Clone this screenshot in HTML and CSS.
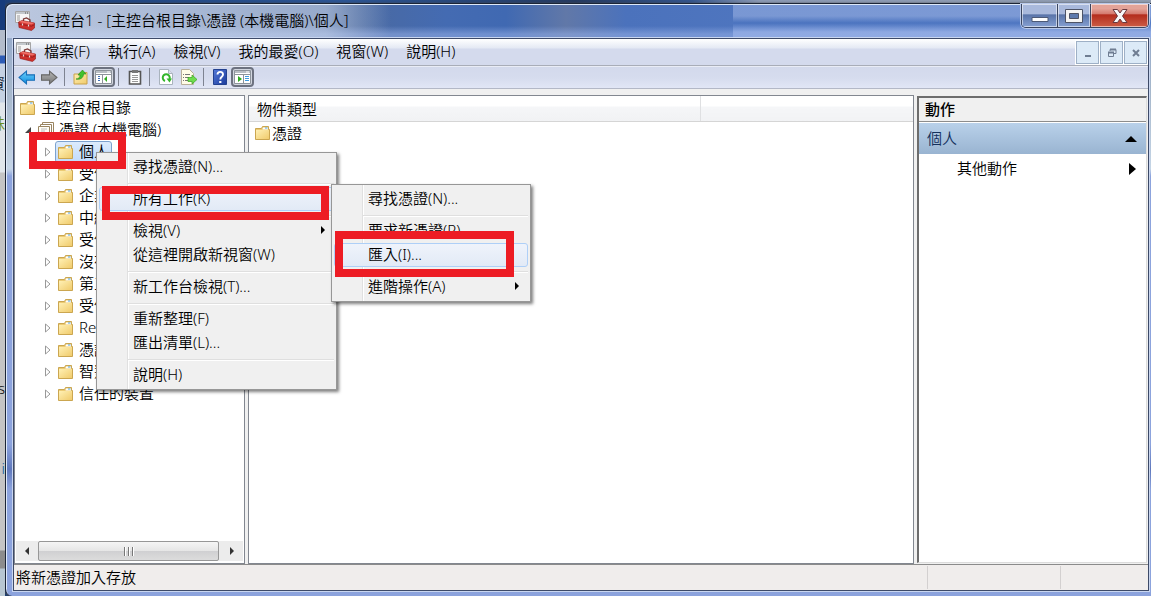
FILE: index.html
```html
<!DOCTYPE html>
<html lang="zh-Hant">
<head>
<meta charset="utf-8">
<title>主控台1</title>
<link rel="stylesheet" href="styles.css">
</head>
<body>
<svg class="defs" aria-hidden="true">
  <defs>
    <linearGradient id="gold" x1="0" y1="0" x2="1" y2="1"><stop offset="0" stop-color="#fff0b4"/><stop offset="1" stop-color="#f0cb6c"/></linearGradient>
    <linearGradient id="blue" x1="0" y1="0" x2="0" y2="1"><stop offset="0" stop-color="#6fd0fa"/><stop offset="1" stop-color="#0d8de0"/></linearGradient>
    <linearGradient id="gray" x1="0" y1="0" x2="0" y2="1"><stop offset="0" stop-color="#b5b5b5"/><stop offset="1" stop-color="#777"/></linearGradient>
    <linearGradient id="navy" x1="0" y1="0" x2="1" y2="1"><stop offset="0" stop-color="#5479d8"/><stop offset="1" stop-color="#1b3b9c"/></linearGradient>
    <symbol id="folder" viewBox="0 0 15 14">
      <path d="M.500 2.500h6l1-2h6v3h1v10H.500z" fill="#eccb74" stroke="#cba650"/>
      <path d="M8 1.500h5v2H7.500z" fill="#fff"/><path d="M10 1.500h2.500v1H10z" fill="#4fa3e0"/>
      <path d="M1 4h13v9H1z" fill="url(#gold)"/>
    </symbol>
    <symbol id="toolbox" viewBox="0 0 20 20">
      <path d="M.500.500h14v11H.500z" fill="#f6f6f6" stroke="#a5a5a5"/>
      <path d="M1 1h13v2H1z" fill="#c3c8cc"/><path d="M2 5h3M2 7h3M2 9h3" stroke="#9b9b9b"/><path d="M10 2h1M12 2h1" stroke="#555"/>
      <path d="M8.500 10.500v-2.500l3-1 3.500 2v2.500" fill="none" stroke="#7d3a38" stroke-width="1.300"/>
      <path d="M3.500 11l3.500-1.500 12.500 2.500v5l-3 2.500L4 16.500z" fill="#cf302c" stroke="#8f1a18" stroke-width=".6"/>
      <path d="M4 11l3-1.300 12.300 2.400-3 1.400z" fill="#ef6f66"/><path d="M4 13l12.500 2.200 3-1.500" stroke="#8d1a18" fill="none" stroke-width=".8"/>
      <path d="M7.500 12.500v2M13.500 13.500v2" stroke="#e8d8d8" stroke-width="1.200"/>
    </symbol>
    <symbol id="certs" viewBox="0 0 16 16">
      <path d="M4.500.500h11v10h-11z" fill="#fff" stroke="#9a8560"/><path d="M2.500 2.500h11v10h-11z" fill="#fff" stroke="#9a8560"/>
      <path d="M.500 4.500h11v10H.500z" fill="#fffdf5" stroke="#9a8560"/><path d="M3 7h6M3 9h4" stroke="#bbb"/><path d="M8 10h3v3H8z" fill="#d8942c"/>
    </symbol>
    <symbol id="arrow" viewBox="0 0 16 14"><path d="M1 7l7-6v3.500h7.500v5H8V13z"/></symbol>
    <symbol id="up" viewBox="0 0 16 16">
      <path d="M1 5h5l1-1.500h7V15H1z" fill="url(#gold)" stroke="#c9a24c"/>
      <path d="M3 10c3 0 4-2 4-4H5l4.500-5L13 5h-2.500C10.500 9 7 11 3 10z" fill="#41c22d" stroke="#228c18" stroke-width=".6"/>
    </symbol>
    <symbol id="pane-l" viewBox="0 0 17 14">
      <path d="M.500.500h16v13H.500z" fill="#fff" stroke="#8d939b"/><path d="M1 1h15v2H1z" fill="#b8bdc4"/><path d="M12 2h3" stroke="#fff"/><path d="M1 4.500h15M7.500 5v8" stroke="#8d939b"/>
      <path d="M3 6.500h2M3 8.500h2M3 10.500h2" stroke="#3e6db5"/><path d="M12 6v6L9 9z" fill="#2faa20"/>
    </symbol>
    <symbol id="pane-r" viewBox="0 0 17 14">
      <path d="M.500.500h16v13H.500z" fill="#fff" stroke="#8d939b"/><path d="M1 1h15v2H1z" fill="#b8bdc4"/><path d="M12 2h3" stroke="#fff"/><path d="M1 4.500h15M9.500 5v8" stroke="#8d939b"/>
      <path d="M11 6.500h4M11 8.500h4M11 10.500h4" stroke="#3e9be0"/><path d="M4 6v6l4-3z" fill="#2faa20"/>
    </symbol>
    <symbol id="clip" viewBox="0 0 14 16">
      <path d="M1.500 2.500h11v12.500h-11z" fill="#fff" stroke="#555" stroke-width="1.600"/><path d="M4 1h6v3H4z" fill="#777"/>
      <path d="M4 6.500h6M4 8.500h6M4 10.500h6M4 12.500h6" stroke="#999"/>
    </symbol>
    <symbol id="refresh" viewBox="0 0 14 16">
      <path d="M.500.500h9l4 4v11H.500z" fill="#fff" stroke="#a9b3bd"/><path d="M9.500.500v4h4" fill="#dde" stroke="#a9b3bd"/>
      <path d="M6 12a3.500 3.500 0 1 1 4.500-2" fill="none" stroke="#33b52b" stroke-width="2"/><path d="M7.500 9.500h5.500l-2.500 4z" fill="#33b52b"/>
    </symbol>
    <symbol id="export" viewBox="0 0 16 16">
      <path d="M.500.500h8l4 4v11H.500z" fill="#fffce8" stroke="#b9b09a"/><path d="M2 5.500h1M2 8.500h1M2 11.500h1M4 5.500h5M4 8.500h4M4 11.500h4" stroke="#777"/>
      <path d="M7 8.500h4V6l5 4.500-5 4.500v-2.500H7z" fill="#6fdc4e" stroke="#36a51f" stroke-width=".7"/>
    </symbol>
    <symbol id="help" viewBox="0 0 14 16">
      <path d="M.500.500h13v15H.500z" fill="url(#navy)" stroke="#23418f"/><path d="M4.500 5.500c0-3.500 5.500-3.500 5.500 0C10 8 7.300 7.500 7.300 10.500" fill="none" stroke="#fff" stroke-width="1.900"/><path d="M6.200 12h2.200v2H6.200z" fill="#fff"/>
    </symbol>
    <symbol id="closed" viewBox="0 0 8 10"><path d="M1.500 1v8l4.500-4z" fill="#fff" stroke="#999"/></symbol>
  </defs>
</svg>

<div class="backdrop" aria-hidden="true">
  <span class="bit bit-tool">資</span><span class="bit bit-green">株</span><span class="bit bit-s">s</span><span class="bit bit-i">i</span>
</div>

<main class="window">
  <header class="titlebar">
    <svg class="app-icon"><use href="#toolbox"/></svg>
    <h1 class="title">主控台1 - [主控台根目錄\憑證 (本機電腦)\個人]</h1>
    <div class="caption">
      <button class="cap cap-min" aria-label="最小化"><svg width="18" height="7"><path d="M1 1.500h16v4H1z" fill="#fff" stroke="#4d5a77"/></svg></button>
      <button class="cap cap-max" aria-label="最大化"><svg width="18" height="14"><path d="M.500.500h17v13H.500z" fill="#f4f4f4" stroke="#4d5366"/><path d="M4.500 4.500h9v5h-9z" fill="#5c79ad" stroke="#4d5366"/></svg></button>
      <button class="cap cap-close" aria-label="關閉"><svg width="16" height="14"><path d="M1 .500h4.500L8 4l2.500-3.500H15L10.500 7l4.500 6.500h-4.500L8 10l-2.500 3.500H1L5.500 7z" fill="#f8f8f8" stroke="#6a3a40"/></svg></button>
    </div>
  </header>

  <div class="client">
    <nav class="menubar">
      <svg class="app-icon"><use href="#toolbox"/></svg>
      <button>檔案(F)</button><button>執行(A)</button><button>檢視(V)</button><button>我的最愛(O)</button><button>視窗(W)</button><button>說明(H)</button>
      <div class="mdi">
        <button aria-label="最小化子視窗"><svg width="10" height="10"><path d="M2 8h6" stroke="#6f7d92" stroke-width="2"/></svg></button>
        <button aria-label="還原子視窗"><svg width="10" height="10"><path d="M3 3V1.500h6v4H7M1.500 4.500h5v4h-5z" fill="none" stroke="#6f7d92"/><path d="M3 1.500h6M1 4.500h6" stroke="#6f7d92" stroke-width="2"/></svg></button>
        <button aria-label="關閉子視窗"><svg width="10" height="10"><path d="M2 2l6 6M8 2L2 8" stroke="#6f7d92" stroke-width="2"/></svg></button>
      </div>
    </nav>

    <div class="toolbar">
      <button aria-label="上一頁"><svg width="17" height="15" fill="url(#blue)" stroke="#1a6fb8"><use href="#arrow"/></svg></button>
      <button aria-label="下一頁"><svg class="flip" width="17" height="15" fill="url(#gray)" stroke="#666"><use href="#arrow"/></svg></button>
      <i class="sep"></i>
      <button aria-label="上一層"><svg width="16" height="16"><use href="#up"/></svg></button>
      <button class="on" aria-label="顯示或隱藏主控台樹狀目錄"><svg width="17" height="14"><use href="#pane-l"/></svg></button>
      <i class="sep"></i>
      <button aria-label="內容"><svg width="14" height="16"><use href="#clip"/></svg></button>
      <i class="sep"></i>
      <button aria-label="重新整理"><svg width="14" height="16"><use href="#refresh"/></svg></button>
      <button aria-label="匯出清單"><svg width="16" height="16"><use href="#export"/></svg></button>
      <i class="sep"></i>
      <button aria-label="說明"><svg width="14" height="16"><use href="#help"/></svg></button>
      <button class="on" aria-label="顯示或隱藏動作窗格"><svg width="17" height="14"><use href="#pane-r"/></svg></button>
    </div>

    <div class="panes">
      <section class="tree">
        <ul class="nodes">
          <li class="root"><button><svg class="ico"><use href="#folder"/></svg><span>主控台根目錄</span></button></li>
          <li class="store"><svg class="tri"><path d="M7 2v6H1z" fill="#444"/></svg><button><svg class="ico tall"><use href="#certs"/></svg><span>憑證 (本機電腦)</span></button></li>
          <li class="leaf"><svg class="tri"><use href="#closed"/></svg><button class="selected"><svg class="ico"><use href="#folder"/></svg><span>個人</span></button></li>
          <li class="leaf"><svg class="tri"><use href="#closed"/></svg><button><svg class="ico"><use href="#folder"/></svg><span>受信任</span></button></li>
          <li class="leaf"><svg class="tri"><use href="#closed"/></svg><button><svg class="ico"><use href="#folder"/></svg><span>企業信任</span></button></li>
          <li class="leaf"><svg class="tri"><use href="#closed"/></svg><button><svg class="ico"><use href="#folder"/></svg><span>中繼憑證</span></button></li>
          <li class="leaf"><svg class="tri"><use href="#closed"/></svg><button><svg class="ico"><use href="#folder"/></svg><span>受信任</span></button></li>
          <li class="leaf"><svg class="tri"><use href="#closed"/></svg><button><svg class="ico"><use href="#folder"/></svg><span>沒有信任</span></button></li>
          <li class="leaf"><svg class="tri"><use href="#closed"/></svg><button><svg class="ico"><use href="#folder"/></svg><span>第三方</span></button></li>
          <li class="leaf"><svg class="tri"><use href="#closed"/></svg><button><svg class="ico"><use href="#folder"/></svg><span>受信任</span></button></li>
          <li class="leaf"><svg class="tri"><use href="#closed"/></svg><button><svg class="ico"><use href="#folder"/></svg><span>Remote</span></button></li>
          <li class="leaf"><svg class="tri"><use href="#closed"/></svg><button><svg class="ico"><use href="#folder"/></svg><span>憑證註冊</span></button></li>
          <li class="leaf"><svg class="tri"><use href="#closed"/></svg><button><svg class="ico"><use href="#folder"/></svg><span>智慧卡</span></button></li>
          <li class="leaf"><svg class="tri"><use href="#closed"/></svg><button><svg class="ico"><use href="#folder"/></svg><span>信任的裝置</span></button></li>
        </ul>
        <div class="hscroll">
          <button aria-label="向左捲動"><svg width="6" height="10"><path d="M5 1v8L1 5z" fill="#333"/></svg></button>
          <div class="thumb"><i></i><i></i><i></i></div>
          <button aria-label="向右捲動"><svg width="6" height="10"><path d="M1 1v8l4-4z" fill="#333"/></svg></button>
        </div>
      </section>

      <section class="list">
        <table>
          <thead><tr><th class="type">物件類型</th><th></th></tr></thead>
          <tbody><tr><td><div class="cell"><svg class="ico"><use href="#folder"/></svg><span>憑證</span></div></td><td></td></tr></tbody>
        </table>
      </section>

      <aside class="actions">
        <h2>動作</h2>
        <button class="group"><span>個人</span><svg width="12" height="6"><path d="M6 0l6 6H0z"/></svg></button>
        <button class="more"><span>其他動作</span><svg width="7" height="12"><path d="M0 0l7 6-7 6z"/></svg></button>
      </aside>
    </div>

    <footer class="status"><span>將新憑證加入存放</span><i class="slot wide"></i><i class="slot"></i></footer>
  </div>
</main>

<div class="menu menu-main" role="menu">
  <button role="menuitem">尋找憑證(N)...</button>
  <hr>
  <button role="menuitem" class="hot">所有工作(K)</button>
  <hr>
  <button role="menuitem"><span>檢視(V)</span><svg width="5" height="8"><path d="M0 0l4 4-4 4z"/></svg></button>
  <button role="menuitem">從這裡開啟新視窗(W)</button>
  <hr>
  <button role="menuitem">新工作台檢視(T)...</button>
  <hr>
  <button role="menuitem">重新整理(F)</button>
  <button role="menuitem">匯出清單(L)...</button>
  <hr>
  <button role="menuitem">說明(H)</button>
</div>
<div class="menu menu-sub" role="menu">
  <button role="menuitem">尋找憑證(N)...</button>
  <hr>
  <button role="menuitem">要求新憑證(R)</button>
  <button role="menuitem" class="hot">匯入(I)...</button>
  <hr>
  <button role="menuitem"><span>進階操作(A)</span><svg width="5" height="8"><path d="M0 0l4 4-4 4z"/></svg></button>
</div>

<div class="mark mark-node"></div>
<div class="mark mark-tasks"></div>
<div class="mark mark-import"></div>
</body>
</html>
```
FILE: styles.css
```css
* { box-sizing: border-box; }
body {
  margin: 0;
  height: 100vh;
  display: flex;
  overflow: hidden;
  background: linear-gradient(90deg, #1c3f78, #2c5594 30%, #253a60 50%, #34558c 60%, #8b99b3 66%, #909cb0);
  font: 350 15px/22px "Noto Sans", "Noto Sans CJK TC", sans-serif;
  color: #000;
}
button {
  margin: 0; padding: 0; border: 0; background: none;
  font: inherit; color: inherit; text-align: left;
  display: flex; align-items: center;
}
svg { display: block; flex: none; }
.defs { position: absolute; width: 0; height: 0; }

.backdrop {
  flex: none; width: 5px; position: relative; overflow: hidden;
  background: linear-gradient(#173c7c 0 30px, #b3bccb 30px 55px, #2d5cb5 56px 63px, #c5d2e3 64px 102px, #e1e6ea 103px 172px, #c4c4c4 173px 550px, #8c8c8c 551px 568px, #b7c6d1 569px);
}
.bit { position: absolute; right: 0; }
.bit-tool { top: 72px; color: #123; }
.bit-green { top: 112px; color: #6b8e23; }
.bit-s { top: 377px; }
.bit-i { top: 457px; color: #0a5a9c; }

.window {
  flex: 1; min-width: 0;
  margin-top: 3px;
  padding: 0 2px 5px 7px;
  display: flex; flex-direction: column;
  border: solid #1c2536; border-width: 1px 0 0 1px;
  border-radius: 7px 0 0 7px;
  box-shadow: inset 1px 1px #dde8f8, -1px 0 2px #444;
  background:
    linear-gradient(90deg, rgba(228,234,245,.6) 0, rgba(222,230,243,.5) 320px, rgba(200,210,230,0) 385px) 0 0 / 100% 34px no-repeat,
    linear-gradient(rgba(140,166,220,.7) 0 12px, rgba(70,112,190,.5) 19px, rgba(150,175,230,.8) 28px) 727px 0 / 100% 34px no-repeat,
    linear-gradient(rgba(150,175,230,0) 22px, rgba(150,175,230,.55) 30px) 0 0 / 100% 34px no-repeat,
    linear-gradient(90deg, #7f95be 0, #4a69a0 350px, #446bb2 440px, #4069b2 500px, #6178a8 560px, #4b72bc 620px, #5a80c8 100%) 0 0 / 100% 34px no-repeat,
    linear-gradient(#8ea4ca 0, #a7b8cc 90px, #c5d5e6 165px, #8ca3dd 172px, #8ca3dd 440px, #5f78bd 465px, #8ca3dd 485px);
}
.titlebar { height: 34px; flex: none; display: flex; align-items: center; padding-left: 2px; }
.app-icon { width: 20px; height: 20px; }
.title { margin: 0 0 0 5px; padding-bottom: 2px; font: inherit; flex: 1; white-space: nowrap; }
.caption {
  align-self: flex-start; display: flex; height: 24px;
  border: 1px solid #3a4560; border-top: 0; border-radius: 0 0 5px 5px; overflow: hidden;
  box-shadow: 0 0 0 1px #b8c8ea;
}
.cap { justify-content: center; box-shadow: inset 0 0 0 1px rgba(255,255,255,.55); }
.cap-min { width: 35px; padding-top: 8px; background: linear-gradient(#a9b9dc 0 45%, #5873a8 46%, #86a0d2); }
.cap-max { width: 34px; border: solid #3a4560; border-width: 0 1px; background: linear-gradient(#a9b9dc 0 45%, #5873a8 46%, #86a0d2); }
.cap-close { width: 57px; background: linear-gradient(#e3a398 0 20%, #d3766a 45%, #b32c1c 46%, #cc5c45); }

.client {
  flex: 1; min-height: 0; display: flex; flex-direction: column;
  border: 1px solid #3d4a68; background: #f0f0f0;
  box-shadow: 0 0 0 1px #c9d6f0;
}
.menubar {
  flex: none; height: 27px; display: flex; align-items: stretch; padding-left: 2px;
  background: linear-gradient(#fff, #e4e9f4 9px, #d4daed 10px); border-bottom: 1px solid #a9adb8;
}
.menubar .app-icon { align-self: center; margin-right: -1px; }
.menubar > button { padding: 0 9px 2px; }
.mdi { margin-left: auto; display: flex; gap: 1px; padding: 2px 1px 1px; background: #fff; }
.mdi button { width: 23px; justify-content: center; border: 1px solid #9eb0c6; background: #dceaf7; }

.toolbar {
  flex: none; height: 23px; display: flex; align-items: center; padding-left: 1px;
  background: linear-gradient(#fff, #d3d9ec 1px, #d6dcee 12px, #e1e6f6); border-bottom: 1px solid #b3b8c7;
}
.toolbar button { width: 23px; height: 20px; justify-content: center; }
.toolbar .on { border: 2px solid #6d7280; border-radius: 4px; background: #d2d6df; }
.flip { transform: scaleX(-1); }
.sep { width: 1px; height: 18px; margin: 0 4px 0 3px; background: #7e8391; }

.panes {
  flex: 1; min-height: 0; padding-top: 6px;
  display: grid; grid-template-columns: 231px minmax(0, 1fr) 231px; column-gap: 3px;
}
.tree, .list { background: #fff; border: 1px solid #828790; min-width: 0; }
.tree { display: flex; flex-direction: column; overflow: hidden; padding: 1px 1px 2px; }
.nodes { list-style: none; margin: 0; padding: 0; flex: 1; }
.nodes li { height: 22px; display: flex; align-items: center; white-space: nowrap; }
.nodes button { height: 22px; gap: 6px; padding: 0 2px; border: 1px solid transparent; }
.nodes span { padding-bottom: 2px; }
.nodes .root { padding-left: 1px; }
.nodes .store { padding-left: 8px; }
.nodes .store button { gap: 5px; margin-left: 3px; }
.nodes .leaf { padding-left: 28px; }
.nodes .leaf button { margin-left: 3px; }
.nodes .selected { border-color: #7da2ce; border-radius: 3px; background: linear-gradient(#dcebfc, #c1dbfc); }
.ico { width: 15px; height: 14px; }
.tall { width: 16px; height: 16px; }
.tri { width: 8px; height: 10px; }
.hscroll { flex: none; height: 20px; display: flex; background: #ececec; }
.hscroll button { width: 22px; justify-content: center; }
.thumb {
  flex: 1; display: flex; justify-content: center; align-items: center; gap: 2px; margin-right: 2px;
  border: 1px solid #979797; border-radius: 2px; background: linear-gradient(#f5f5f5, #e6e6e6 48%, #d0d0d2 52%, #dcdcdc);
}
.thumb i { width: 2px; height: 9px; background: #777; border-right: 1px solid #fff; }

.list table { width: 100%; border-collapse: collapse; table-layout: fixed; }
.list th {
  height: 25px; padding: 1px 8px 0; font-weight: inherit; text-align: left;
  background: linear-gradient(#fff 0 10px, #f5f6f8 11px, #f1f2f4); border-bottom: 1px solid #d5d5d5;
}
.list .type { width: 68%; border-right: 1px solid #dfe0e2; }
.list td { padding: 0; }
.cell { display: flex; align-items: center; gap: 2px; height: 22px; padding-left: 6px; }

.actions {
  display: flex; flex-direction: column; background: #fff;
  margin: 1px 1px 1px 0; border: solid; border-width: 2px 1px 1px 2px;
  border-color: #6d6d6d #dcdcdc #dcdcdc #6d6d6d;
}
.actions h2 { margin: 0; padding-left: 6px; font: inherit; font-weight: 500; height: 24px; background: #f0f0f0; border-bottom: 1px solid #8d8d8d; }
.actions button { justify-content: space-between; }
.actions span { padding-bottom: 2px; }
.group { height: 31px; margin-top: 1px; padding: 0 9px 0 8px; background: linear-gradient(#b9d1ea, #99b4d1); }
.actions .group span { color: #14305c; }
.more { height: 30px; padding: 0 10px 0 38px; }

.status {
  flex: none; height: 26px; display: flex; align-items: center; padding-left: 2px;
  background: #f0edec; border-top: 1px solid #8b8b8b;
}
.status span { flex: 1; padding-bottom: 1px; }
.slot { width: 88px; height: 23px; border-left: 1px solid #d3d0d0; }
.wide { width: 133px; }

.menu {
  position: absolute; padding: 2px; border: 1px solid #979797;
  box-shadow: 2px 2px 3px rgba(0,0,0,.5);
  background: linear-gradient(90deg, transparent 30px, #e0e0e0 30px 31px, #fff 31px 32px, transparent 32px) #f0f0f0;
}
.menu button {
  width: 100%; height: 24px; padding: 0 7px 2px 33px; justify-content: space-between;
  border: 1px solid transparent; border-radius: 3px; white-space: nowrap;
}
.menu .hot { border-color: #aecff7; background: linear-gradient(#eff3fb, #e2eaf6); }
.menu hr { height: 2px; margin: 4px 0 2px 29px; border: 0; border-top: 1px solid #dfdfdf; background: #fff; }
.menu-main { left: 96px; top: 152px; width: 241px; }
.menu-sub { left: 331px; top: 184px; width: 200px; }

.mark { position: absolute; border: 8px solid #ed1c24; pointer-events: none; }
.mark-node { left: 29px; top: 132px; width: 97px; height: 37px; }
.mark-tasks { left: 102px; top: 186px; width: 227px; height: 34px; }
.mark-import { left: 335px; top: 231px; width: 179px; height: 46px; }
```
